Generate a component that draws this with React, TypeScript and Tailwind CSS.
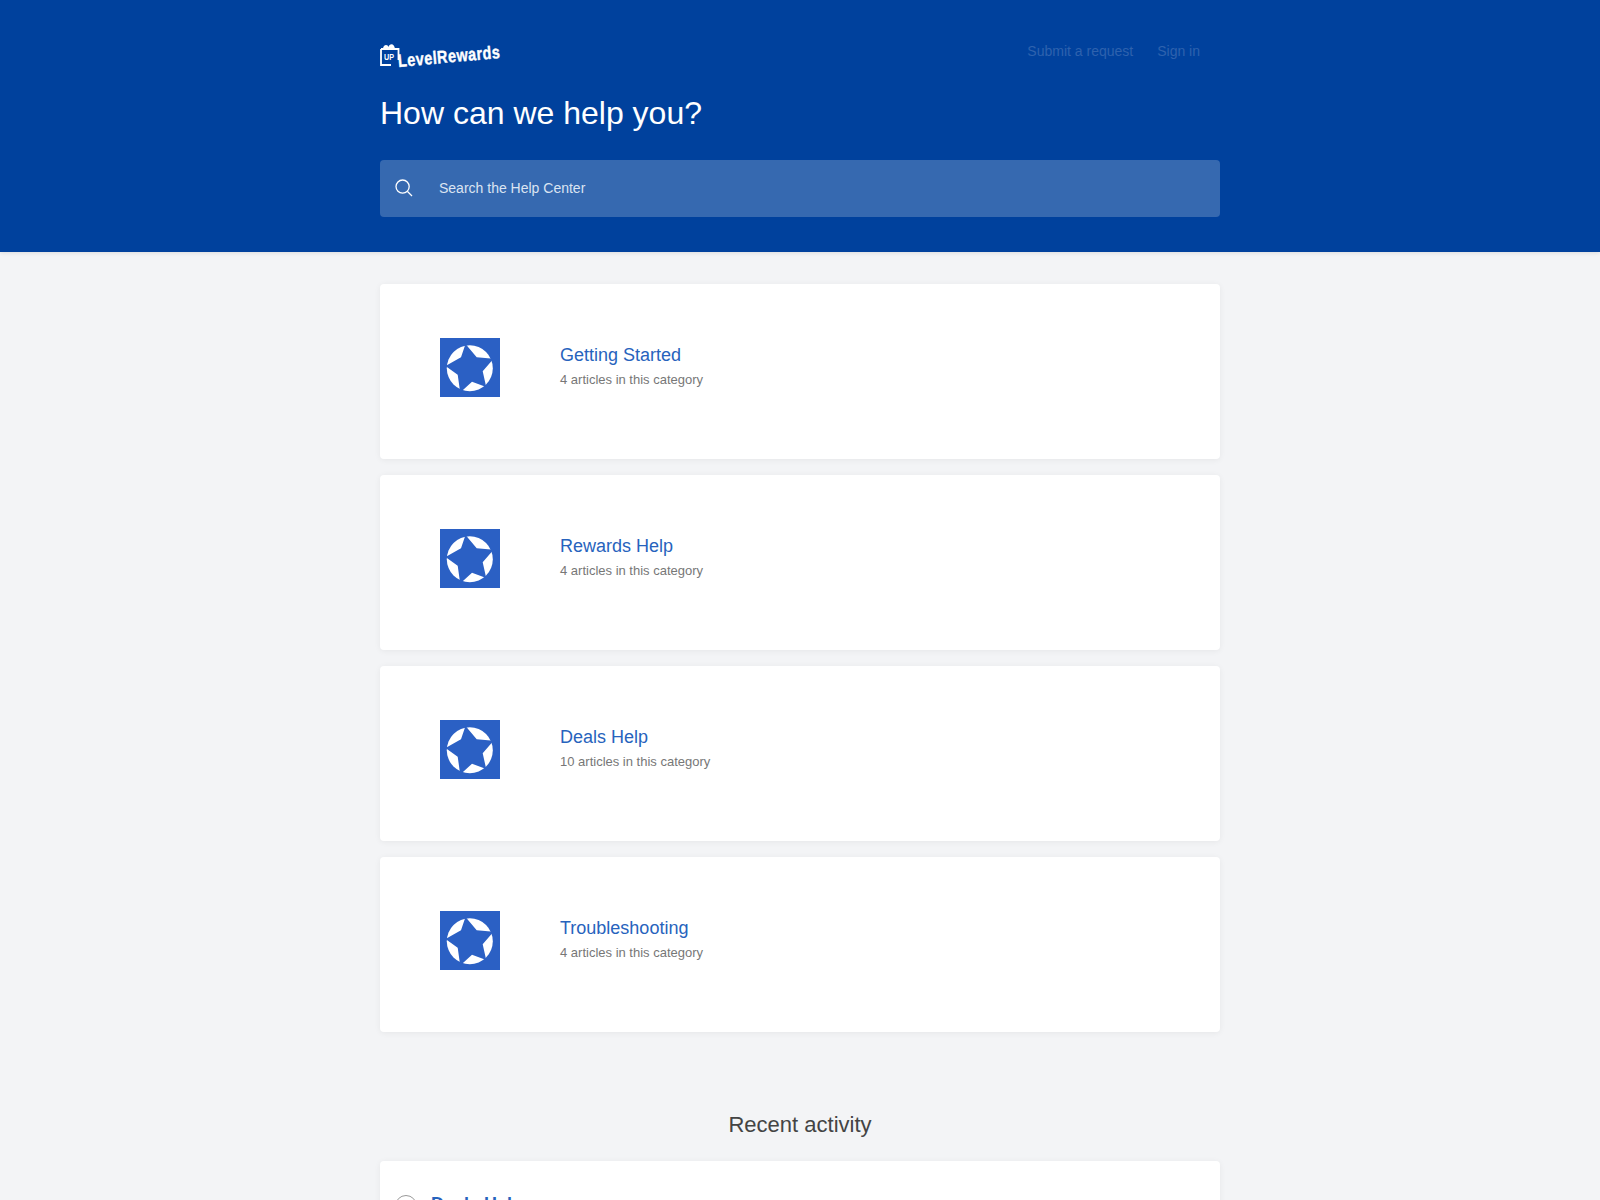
const categories = [
  { id: 1, name: "Getting Started", count: "4 articles in this category" },
  { id: 2, name: "Rewards Help", count: "4 articles in this category" },
  { id: 3, name: "Deals Help", count: "10 articles in this category" },
  { id: 4, name: "Troubleshooting", count: "4 articles in this category" },
];

function StarIcon() {
  return (
    <svg viewBox="0 0 60 59" className="w-[60px] h-[59px] shrink-0">
      <rect width="60" height="59" fill="#2b60c4" />
      <circle cx="29.8" cy="30.3" r="23" fill="#fff" />
      <polygon
        points="25.5,6 36.7,19.3 53.5,20.8 42.7,33.3 46.2,49 32,43.7 20.2,54.5 17.7,36.7 5.5,28 21,19.3"
        fill="#2b60c4"
      />
    </svg>
  );
}

function Logo() {
  return (
    <div className="relative w-[20px] h-[24px] shrink-0">
      <svg viewBox="0 0 20 24" className="w-[20px] h-[24px]">
        <path d="M1 6 H18.5 V17 M11 22 H1 V6" fill="none" stroke="#fff" strokeWidth="1.8" />
        <path d="M3 6 C3 1 8 1 8.5 4 C9.5 0 14.5 0 15 6 Z" fill="#fff" />
      </svg>
      <span className="absolute left-[4px] top-[9px] text-white font-bold text-[9px] leading-[10px] scale-x-[0.8] origin-left">UP</span>
    </div>
  );
}

export default function App() {
  return (
    <div className="bg-[#f3f4f6] min-h-screen font-['Liberation_Sans',Arial,sans-serif] overflow-hidden h-[1200px]">
      <header className="bg-[#00419d] h-[252px] shadow-[0_1px_4px_rgba(0,0,0,0.1)]">
        <div className="w-[840px] mx-auto">
          <div className="flex items-start justify-between pt-[43px] h-[88px]">
            <div className="flex items-start">
              <Logo />
              <span className="text-white font-bold text-[18px] leading-[22px] tracking-[0.6px] ml-[-2px] mt-[7px] -rotate-[5deg] scale-x-[0.8] origin-left whitespace-nowrap [-webkit-text-stroke:0.4px_white]">
                LevelRewards
              </span>
            </div>
            <nav className="flex gap-6 pr-5 text-sm leading-[16px] text-[#2e62ae]">
              <span>Submit a request</span>
              <span>Sign in</span>
            </nav>
          </div>
          <h1 className="text-white text-[32px] leading-[37px] mt-[7px] font-normal">How can we help you?</h1>
          <div className="mt-[28px] h-[57px] pb-px rounded bg-[#3669b0] flex items-center pl-[15px]">
            <svg viewBox="0 0 18 18" className="w-[18px] h-[18px] shrink-0" fill="none" stroke="#fff" strokeWidth="1.3">
              <circle cx="7.6" cy="7.6" r="6.6" />
              <path d="M12.5 12.5 L17 17" />
            </svg>
            <span className="ml-[26px] text-sm text-[#dbe4f2]">Search the Help Center</span>
          </div>
        </div>
      </header>

      <main className="w-[840px] mx-auto pt-8">
        <div className="flex flex-col gap-4">
          {categories.map((c) => (
            <div key={c.id} className="bg-white rounded h-[175px] shadow-[0_1px_6px_rgba(0,0,0,0.06)] flex items-start pl-[60px] pt-[54px]">
              <StarIcon />
              <div className="ml-[60px] pt-[6px]">
                <div className="text-[#2763bd] text-[18px] leading-[22px]">{c.name}</div>
                <div className="text-[#777] text-[13px] leading-[16px] mt-[6px]">{c.count}</div>
              </div>
            </div>
          ))}
        </div>

        <h2 className="text-center text-[#444] text-[22px] leading-[26px] mt-[80px]">Recent activity</h2>

        <div className="bg-white rounded mt-[23px] h-[200px] shadow-[0_1px_6px_rgba(0,0,0,0.06)] pl-[15px] pt-[34px] flex items-start gap-[14px]">
          <div className="w-[22px] h-[22px] rounded-full border border-[#999] bg-white shrink-0"></div>
          <div className="text-[#2763bd] font-bold text-[18px] leading-[22px] -mt-[2px]">Deals Help</div>
        </div>
      </main>
    </div>
  );
}
